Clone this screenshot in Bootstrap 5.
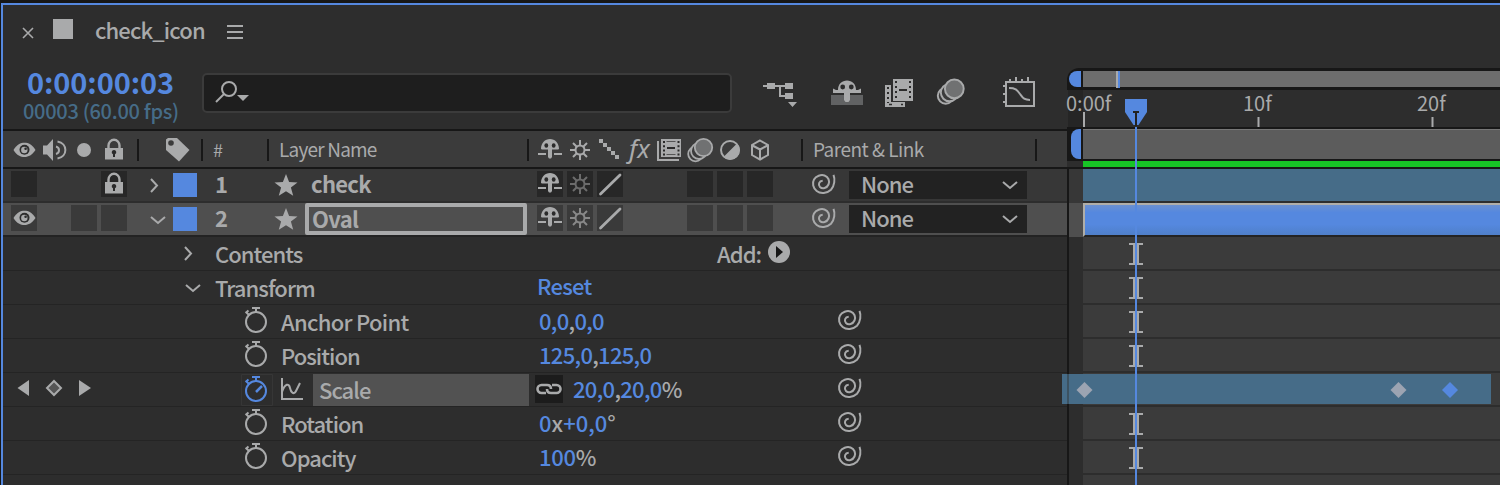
<!DOCTYPE html>
<html lang="en">
<head>
<meta charset="utf-8">
<meta name="viewport" content="width=device-width, initial-scale=1">
<title>check_icon</title>
<link href="https://cdn.jsdelivr.net/npm/bootstrap@5.3.0/dist/css/bootstrap.min.css" rel="stylesheet">
<style>
:root{--bg:#2d2d2d;--ink:#171717;--mid:#3b3b3b;--fg:#a9aaab;--blue:#5588df;--steel:#466c88}
body{width:1500px;height:485px;overflow:hidden;background:var(--ink);color:var(--fg);font-family:"Noto Sans CJK SC","Noto Sans",sans-serif;font-size:22px;line-height:1;font-weight:500;letter-spacing:-.95px}
svg{display:block;flex:none;overflow:visible}
.b{color:var(--blue)}
.g{color:var(--fg)}
.panel{height:485px;padding:3px 0 0 1px}
.inner{height:482px;border-top:2px solid var(--blue);border-left:2px solid var(--blue);background:var(--bg)}
.outline{width:1064px}
.tl{width:433px}
.t{white-space:nowrap;display:inline-block}
/* tab and search area */
.tabs{height:56px;padding:0 0 4px 20px}
.tools{height:68px}
.clock{width:199px;padding-left:20px}
.clock .big{font-size:29px;font-weight:700;line-height:34px;color:var(--blue);padding-left:4px;letter-spacing:-.1px}
.clock .sub{font-size:20px;line-height:24px;padding-top:1px;color:var(--steel);letter-spacing:-.3px}
.search{width:530px;height:40px;margin-top:12px;border:2px solid var(--mid);border-radius:5px;background:#1e1e1e}
/* column grid shared by the header and layer rows */
.cols{display:grid;grid-template-columns:8px repeat(4,30px) 42px 28px 66px 270px repeat(8,30px) 24px 1fr;height:34px}
.head{height:40px;border-top:2px solid var(--ink);border-bottom:2px solid var(--ink);background:var(--mid);font-size:19px;font-weight:400;padding-top:1px}
.head .sw{margin-top:5px}
.head .t{line-height:34px;letter-spacing:-.8px}
.sep{width:2px;height:22px;margin-top:7px;background:var(--ink);flex:none}
.sw{width:26px;height:26px;margin-top:2px}
.layer{background:#373737;border-bottom:2px solid var(--bg)}
.layer b{letter-spacing:-.7px}
.layer .off{background:#272727}
.layer.sel{background:#4f4f4f;border-color:#232323}
.layer.sel .off{background:#3a3a3a}
.swatch{width:24px;height:24px;background:var(--blue);margin-top:4px}
.namebox{width:222px;height:32px;border:4px solid var(--fg);border-radius:2px;padding-left:3px}
.picker{width:178px;height:28px;background:#222;padding:0 9px 0 12px;line-height:24px}
.picker .t{margin-top:-5px}
.prop{height:34px;border-bottom:1px solid #242424}
.prop .t{margin-top:-2px}
.c1{width:212px}
.c2{width:278px;padding-left:239px}
.lab{width:258px}
.val{width:299px}
.val,.num{letter-spacing:-.7px;margin-top:-3px}
.hl{width:216px;height:32px;background:#525252;padding-left:6px}
.lnk{width:28px;height:28px;background:#1c1c1c}
/* timeline */
.nav-strip{height:22px;margin-top:63px;background:var(--ink);padding:3px 0 3px 1px;border-radius:12px 0 0 0}
.hand{width:12px;height:16px;background:var(--blue);border-radius:9px 0 0 9px;margin-right:2px}
.strip{background:#6d6d6d;height:16px}
.tick2{width:4px;height:17px;background:var(--blue);border-left:2px solid var(--fg);margin-left:33px}
.ruler{height:37px;font-size:20px;letter-spacing:0;font-weight:400}
.ruler::before{content:"";position:absolute;left:1px;top:0;width:15px;height:37px;background:#252525}
.work{height:34px;border-top:2px solid var(--ink);border-bottom:2px solid var(--ink);background:var(--ink);padding-left:3px}
.work .hand{width:10px;height:30px;border-radius:8px 0 0 8px}
.lane{height:34px;border-left:2px solid var(--ink);padding-left:14px;background:var(--bg)}
.lane>div{height:34px;border-bottom:2px solid var(--bg);background:var(--mid)}
.lane.l1{background:#373737}.lane.l1>div{background:var(--steel)}
.lane.l2{background:#4f4f4f}.lane.l2>div{background:linear-gradient(#6b90d0,#5588df 25%,#5588df 65%,#4f7fc9);border:2px solid #b0aea8;border-right:0;border-bottom-color:#232323}
.ibeam{margin:0 auto 0 46px}
.keybar{position:absolute;left:1062px;top:374px;width:429px;height:30px;background:var(--steel)}
.over{position:absolute;left:0;top:0;pointer-events:none}
.frame-label{position:absolute;top:3px}
</style>
</head>
<body>
<svg width="0" height="0" class="position-absolute"><defs>
<g id="eye"><path fill="#a9aaab" d="M2.500 13C6 7.500 9.500 5.800 13.500 5.800S21 7.500 24.500 13c-3.500 5-7 7-11 7S6 18.500 2.500 13z"/><circle cx="13.500" cy="12.700" r="5" fill="#2d2d2d"/><circle cx="13.300" cy="13" r="3.200" fill="#a9aaab"/><circle cx="14.600" cy="11.800" r="1.300" fill="#2d2d2d"/></g>
<g id="spk" fill="none" stroke="#a9aaab" stroke-width="2"><path d="M2 8.500h4L12 2v22l-6-6.500H2z" fill="#a9aaab" stroke="none"/><path d="M15 9.500c4 1 4 6.500 0 7.500M16.500 4.500c10.500 2 10.500 15 0 17"/></g>
<g id="lock"><path d="M7.500 12V8.500a5.500 5.700 0 0 1 11 0V12" fill="none" stroke="#a9aaab" stroke-width="2.400"/><path d="M4 11h18v11.500H4z" fill="#a9aaab"/><path d="M13 13a2.200 2.200 0 0 1 1 4.200V20h-2v-2.800A2.200 2.200 0 0 1 13 13z" fill="#2a2a2a"/></g>
<g id="shy" fill="#a9aaab"><path d="M4 12c0-6 4-10 9-10s9 4 9 10l-1 .5h-6V20l-1 1.500h-2L11 20v-7.500H5zM1 16h8v2H1zM17 16h8v2h-8z"/><ellipse cx="9.300" cy="8.500" rx="1.900" ry="2.200" fill="#2a2a2a"/><ellipse cx="16.700" cy="8.500" rx="1.900" ry="2.200" fill="#2a2a2a"/></g>
<g id="sun" fill="none" stroke="currentColor" stroke-width="2"><circle cx="13" cy="13" r="4.500"/><path d="M13 3v5M13 18v5M3 13h5M18 13h5M6 6l3.500 3.500M16.500 16.500L20 20M20 6l-3.500 3.500M9.500 16.500L6 20"/></g>
<g id="blur" stroke="#a9aaab" stroke-width="1.800" fill="#3b3b3b"><circle cx="8.500" cy="17" r="7.300"/><circle cx="12" cy="14" r="8"/><circle cx="16.500" cy="10.500" r="8.700" fill="#707172"/></g>
<path id="star" d="M12 0l3.100 8 8.400.4-6.600 5.200 2.300 8.200L12 17.200l-7.200 4.600 2.300-8.200L.5 8.400 8.900 8z" fill="#a9aaab"/>
<path id="spiral" fill="none" stroke="#a9aaab" stroke-width="2" d="M21.500.800C23.200 5 22.600 12 19 15.700 15 19.500 8.500 20 4.700 17 1 14 0 9 2 5.500 4 2 9 .300 12.500 1.500 16.500 3 18 7 16.500 10.500 15 14 10.500 15.500 8 13 5.800 10.500 7 7 10.700 6.800"/>
<g id="watch" fill="none" stroke="currentColor" stroke-width="2"><circle cx="11" cy="15" r="10"/><path d="M7 1h8M11 1v4M1.500 5.500l3 3M.5 6l3-2.500"/></g>
<path id="down" fill="none" stroke="#a9aaab" stroke-width="2" d="M1 1l7 6 7-6"/>
<path id="rightc" fill="none" stroke="#a9aaab" stroke-width="2" d="M1 1l6 6.500L1 14"/>
<path id="beam" fill="none" stroke="#a9aaab" stroke-width="2" d="M0 1h14M0 21h14M5 1v20M9 1v20"/>
</defs></svg>

<div class="panel position-relative"><div class="inner d-flex">
<div class="outline d-flex flex-column">
  <div class="tabs d-flex align-items-center">
    <svg width="10" height="10" class="mt-1"><path d="M0 0l10 10M10 0L0 10" stroke="#a9aaab" stroke-width="1.600"/></svg>
    <svg width="20" height="20" style="margin-left:20px"><path d="M0-2h20v20H0z" fill="#a9aaab"/></svg>
    <span class="t" style="margin:-4px 0 0 22px;width:110px;letter-spacing:-.85px">check_icon</span>
    <svg width="16" height="14" style="margin-left:22px;margin-top:1px"><path d="M0 1h16M0 7h16M0 13h16" stroke="#a9aaab" stroke-width="2"/></svg>
  </div>
  <div class="tools d-flex">
    <div class="clock"><div class="big" style="margin-top:3px"><span class="t">0:00:00:03</span></div><div class="sub"><span class="t">00003 (60.00 fps)</span></div></div>
    <div class="search"><svg width="36" height="30"><g fill="none" stroke="#a9aaab" stroke-width="2"><circle cx="25" cy="14" r="7"/><path d="M20 19l-8 8"/></g><path d="M33 20h12l-6 6z" fill="#a9aaab"/></svg></div>
    <svg width="300" height="50" style="margin-left:18px"><g transform="translate(-750,-61)">
      <g fill="#a9aaab"><path d="M763 85h4v-2h8v2h10v-2h8v6h-8v-2h-4v8h4v-2h8v6h-8v-2h-6V87h-4v2h-8v-2h-4zM788 102h9l-4.500 5z"/>
      <path d="M831 95h32v10h-32z" fill="#616263"/><path d="M833 88.500l3 1.500h2c0-6 4-9.500 9-9.500s9 3.500 9 9.500h2l3-1.500v4.500h-11v7l-1.500 2h-3l-1.500-2v-7h-11z"/><circle cx="842.700" cy="87" r="2.400" fill="#2c2c2c"/><circle cx="851.300" cy="87" r="2.400" fill="#2c2c2c"/>
      <path d="M885 85h6v17h14v5h-20z"/><path d="M893 79h20v22h-20z"/><path d="M888 87v16" stroke="#2c2c2c" stroke-width="2" stroke-dasharray="2 3"/><path d="M889 104.500h14" stroke="#2c2c2c" stroke-width="1.500" stroke-dasharray="3 9"/>
      <path d="M896 81v18M910 81v18" stroke="#2c2c2c" stroke-width="2" stroke-dasharray="2 3"/><path d="M899 90h8" stroke="#2c2c2c" stroke-width="2"/></g>
      <use href="#blur" transform="translate(936.500,77.500) scale(1.080)"/>
      <g fill="none" stroke="#a9aaab" stroke-width="2"><path d="M1006 82h28v24h-28zM1010 81v-2M1016 81v-4M1022 81v-2M1028 81v-4M1005 86h-2M1005 94h-2M1005 102h-2"/><path d="M1009 88c7 0 8 2 11 6s4 6 10 6"/></g>
    </g></svg>
  </div>
  <div class="head"><div class="cols">
    <i></i><svg class="sw"><use href="#eye"/></svg><svg class="sw"><use href="#spk"/></svg><svg class="sw"><circle cx="13" cy="13" r="7" fill="#a9aaab"/></svg><svg class="sw"><use href="#lock"/></svg>
    <div class="d-flex"><div class="sep" style="margin-left:6px"></div><svg class="sw" style="margin-left:26px"><path d="M1 2.500L3 1h9l12.500 12L14 24.500 1 13z" fill="#a9aaab"/><circle cx="6" cy="6" r="2.800" fill="#3b3b3b"/></svg></div><i></i>
    <div class="d-flex"><div class="sep"></div><span class="t" style="margin-left:10px;font-size:18px">#</span></div>
    <div class="d-flex"><div class="sep"></div><span class="t" style="margin-left:10px">Layer Name</span><div class="sep ms-auto me-2"></div></div>
    <svg class="sw"><use href="#shy"/></svg><svg class="sw"><use href="#sun"/></svg>
    <svg class="sw"><path fill="#a9aaab" d="M2 2h4v4H2zM6 6h4v4H6zM10 10h4v4h-4zM14 14h4v4h-4zM18 18h4v4h-4z"/></svg>
    <span class="t" style="font:italic 26px/33px 'Noto Sans',sans-serif;padding-left:2px;letter-spacing:0">fx</span>
    <svg class="sw"><path d="M1 4v19h21" fill="none" stroke="#a9aaab" stroke-width="2"/><path d="M4 2h20v18H4z" fill="#a9aaab"/><path d="M7 4v15M21.500 4v15" stroke="#2a2a2a" stroke-width="2" stroke-dasharray="2 2.200"/><path d="M10 11h8" stroke="#2a2a2a" stroke-width="2"/><path d="M9.500 4.500h9M9.500 17.500h9" stroke="#555" stroke-width="1"/></svg>
    <svg class="sw"><use href="#blur"/></svg>
    <svg class="sw"><circle cx="13" cy="13" r="9" fill="none" stroke="#a9aaab" stroke-width="2"/><path d="M20 6.500A9.500 9.500 0 0 1 6.500 20z" fill="#a9aaab"/></svg>
    <svg class="sw"><path d="M13 3.500l8 4.500v10l-8 4.500L5 18V8zM5.500 8.500l7.500 4 7.500-4M13 12.500v10" fill="none" stroke="#a9aaab" stroke-width="2"/></svg>
    <i></i><div class="d-flex"><div class="sep"></div><span class="t" style="margin-left:10px;letter-spacing:-.5px">Parent &amp; Link</span><div class="sep ms-auto" style="margin-right:30px"></div></div>
  </div></div>

  <div class="layer cols">
    <i></i><div class="sw off"></div><i></i><i></i><svg class="sw off"><use href="#lock"/></svg>
    <svg width="8" height="15" style="margin:9px 0 0 19px"><use href="#rightc"/></svg><div class="swatch"></div>
    <b class="t" style="line-height:29px;padding-left:14px">1</b>
    <div class="d-flex"><svg width="24" height="22" style="margin:5px 0 0 7px"><use href="#star"/></svg><b class="t" style="line-height:29px;margin-left:13px">check</b></div>
    <svg class="sw off"><use href="#shy"/></svg><svg class="sw off" style="color:#6c6c6c"><use href="#sun"/></svg><svg class="sw off"><path d="M3.500 23L23 4" stroke="#a9aaab" stroke-width="2.800" stroke-linecap="round"/></svg><i></i><i></i><div class="sw off"></div><div class="sw off"></div><div class="sw off"></div>
    <i></i><div class="d-flex"><svg width="24" height="22" style="margin:5px 13px 0 11px"><use href="#spiral"/></svg><div class="picker d-flex align-items-center justify-content-between" style="margin-top:2px"><span class="t">None</span><svg width="16" height="8"><use href="#down"/></svg></div></div>
  </div>
  <div class="layer sel cols">
    <i></i><svg class="sw off"><use href="#eye"/></svg><i></i><div class="sw off"></div><div class="sw off"></div>
    <svg width="16" height="8" style="margin:13px 0 0 19px"><use href="#down"/></svg><div class="swatch"></div>
    <b class="t" style="line-height:29px;padding-left:14px">2</b>
    <div class="d-flex"><svg width="24" height="22" style="margin:5px 0 0 7px"><use href="#star"/></svg><div class="namebox" style="margin-left:7px"><b class="t" style="line-height:21px">Oval</b></div></div>
    <svg class="sw off"><use href="#shy"/></svg><svg class="sw off" style="color:#888"><use href="#sun"/></svg><svg class="sw off"><path d="M3.500 23L23 4" stroke="#a9aaab" stroke-width="2.800" stroke-linecap="round"/></svg><i></i><i></i><div class="sw off"></div><div class="sw off"></div><div class="sw off"></div>
    <i></i><div class="d-flex"><svg width="24" height="22" style="margin:5px 13px 0 11px"><use href="#spiral"/></svg><div class="picker d-flex align-items-center justify-content-between" style="margin-top:2px"><span class="t">None</span><svg width="16" height="8"><use href="#down"/></svg></div></div>
  </div>

  <div class="prop d-flex align-items-center"><div class="c1"><svg width="10" height="15" style="margin-left:181px"><use href="#rightc"/></svg></div><span class="t" style="width:502px">Contents</span><span class="t">Add:</span><svg width="22" height="22" style="margin-left:7px;margin-top:-3px"><circle cx="11" cy="11" r="11" fill="#a9aaab"/><path d="M8 5l7 6-7 6z" fill="#171717"/></svg></div>
  <div class="prop d-flex align-items-center"><div class="c1"><svg width="16" height="8" style="margin-left:182px"><use href="#down"/></svg></div><span class="t" style="width:322px">Transform</span><span class="t b" style="margin-top:-5px;letter-spacing:-.7px">Reset</span></div>
  <div class="prop d-flex align-items-center"><div class="c2"><svg width="22" height="26" style="margin:-4px 0 0 3px"><use href="#watch"/></svg></div><span class="t lab" style="letter-spacing:-.7px">Anchor Point</span><span class="val"><span class="t b">0,0<span class="g">,</span>0,0</span></span><svg width="24" height="22" style="margin-top:-1px"><use href="#spiral"/></svg></div>
  <div class="prop d-flex align-items-center"><div class="c2"><svg width="22" height="26" style="margin:-4px 0 0 3px"><use href="#watch"/></svg></div><span class="t lab">Position</span><span class="val"><span class="t b">125,0<span class="g">,</span>125,0</span></span><svg width="24" height="22" style="margin-top:-1px"><use href="#spiral"/></svg></div>
  <div class="prop d-flex align-items-center">
    <svg width="67" height="18" style="margin:-3px 0 0 15px"><path d="M11 1v16L-.5 9zM61 1v16l12-8z" fill="#a9aaab"/><path d="M36 2l7 7-7 7-7-7z" fill="#555" stroke="#a9aaab" stroke-width="2"/></svg>
    <svg width="32" height="32" style="margin-left:156px;color:#5588df"><path d="M.5.500h31v31H.5z" fill="none" stroke="#363636"/><use href="#watch" x="4" y="2"/><path d="M15 18l6-6" stroke="#5588df" stroke-width="2.500"/></svg>
    <svg width="22" height="22" style="margin:-1px 0 0 8px"><path d="M1 0v21h21M1 14c3-9 7-9 8-4s4 7 6 3l4-8" fill="none" stroke="#a9aaab" stroke-width="2"/></svg>
    <div class="hl d-flex align-items-center" style="margin-left:10px"><span class="t">Scale</span></div>
    <svg class="lnk" style="margin:-1px 0 0 6px" width="28" height="28"><path d="M11 18H6.500a4 4 0 0 1 0-8H12c2.500 0 4 1.500 4 4M17 10h4.500a4 4 0 0 1 0 8H16c-2.500 0-4-1.500-4-4" fill="none" stroke="#a9aaab" stroke-width="2.600"/></svg>
    <span class="num" style="width:265px;margin-left:10px"><span class="t b">20,0<span class="g">,</span>20,0<span class="g">%</span></span></span><svg width="24" height="22" style="margin-top:-1px"><use href="#spiral"/></svg></div>
  <div class="prop d-flex align-items-center"><div class="c2"><svg width="22" height="26" style="margin:-4px 0 0 3px"><use href="#watch"/></svg></div><span class="t lab">Rotation</span><span class="val"><span class="t b" style="letter-spacing:0">0<span class="g">x</span>+0,0<span class="g">°</span></span></span><svg width="24" height="22" style="margin-top:-1px"><use href="#spiral"/></svg></div>
  <div class="prop d-flex align-items-center"><div class="c2"><svg width="22" height="26" style="margin:-4px 0 0 3px"><use href="#watch"/></svg></div><span class="t lab">Opacity</span><span class="val"><span class="t b" style="letter-spacing:-.3px">100<span class="g">%</span></span></span><svg width="24" height="22" style="margin-top:-1px"><use href="#spiral"/></svg></div>
</div>

<div class="tl">
  <div class="nav-strip d-flex"><div class="hand" style="margin-left:1px"></div><div class="strip flex-grow-1"><div class="tick2"></div></div></div>
  <div class="ruler position-relative">
    <span class="frame-label t" style="left:-1px">0:00f</span><span class="frame-label t" style="left:176px">10f</span><span class="frame-label t" style="left:350px">20f</span>
    <svg width="433" height="37" class="position-relative"><path d="M17 22v15M191.500 27v10M365.500 27v10" stroke="#a9aaab" stroke-width="2"/></svg>
  </div>
  <div class="work d-flex"><div class="hand" style="margin-left:1px"></div><div class="flex-grow-1" style="background:#5c5c5c;border-top:1px solid #777"></div></div>
  <div style="height:8px;border-bottom:2px solid #171717;padding-left:16px"><div style="height:6px;background:#17c426"></div></div>
  <div class="lane l1"><div></div></div>
  <div class="lane l2"><div></div></div>
  <div class="lane"><div><svg class="ibeam" width="14" height="28"><use href="#beam" y="6"/></svg></div></div>
  <div class="lane"><div><svg class="ibeam" width="14" height="28"><use href="#beam" y="6"/></svg></div></div>
  <div class="lane"><div><svg class="ibeam" width="14" height="28"><use href="#beam" y="6"/></svg></div></div>
  <div class="lane"><div><svg class="ibeam" width="14" height="28"><use href="#beam" y="6"/></svg></div></div>
  <div class="lane"><div></div></div>
  <div class="lane"><div><svg class="ibeam" width="14" height="28"><use href="#beam" y="6"/></svg></div></div>
  <div class="lane"><div><svg class="ibeam" width="14" height="28"><use href="#beam" y="6"/></svg></div></div>
  <div class="lane"><div></div></div>
</div>
</div>
<div class="keybar"></div>
<svg class="over" width="1500" height="485">
  <path d="M1068 374v30" stroke="#3a4a55" stroke-width="1.500"/>
  <path d="M1084.500 382l8 8-8 8-8-8zM1398.500 382l8 8-8 8-8-8z" fill="#9ca4b2"/><path d="M1450 382l8 8-8 8-8-8z" fill="#5588df"/>
  <path d="M1125 99h22v13l-8.500 13h-5L1125 112z" fill="#5588df"/><path d="M1133 112h6M1136 112v14" stroke="#222" stroke-width="2"/>
  <path d="M1136 127v358" stroke="#5588df" stroke-width="2"/>
</svg>
</div>
<script src="https://cdn.jsdelivr.net/npm/bootstrap@5.3.0/dist/js/bootstrap.bundle.min.js"></script>
</body>
</html>
